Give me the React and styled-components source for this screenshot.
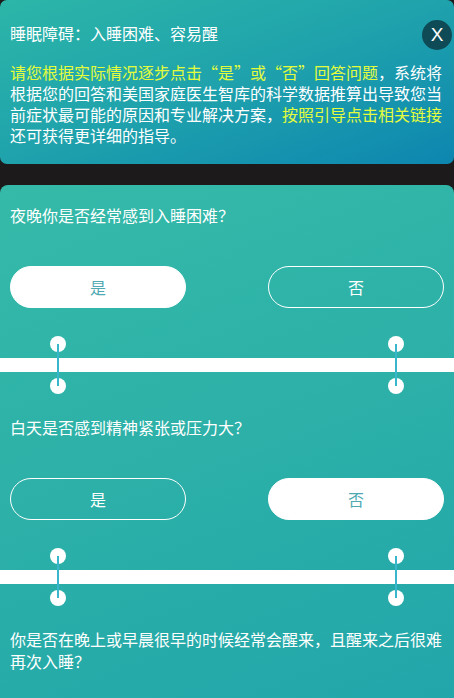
import React, { useState } from "react";
import styled, { createGlobalStyle } from "styled-components";

const Global = createGlobalStyle`
  html, body { margin: 0; padding: 0; background: #1c1a1b; }
  body { font-family: "Noto Sans CJK SC", "Noto Sans", sans-serif; }
  * { box-sizing: border-box; }
`;

const Page = styled.div`
  width: 454px;
  min-height: 698px;
  background: #1c1a1b;
  display: flex;
  flex-direction: column;
  gap: 21px;
`;

const Header = styled.header`
  position: relative;
  height: 164px;
  padding: 22px 10px 0 10px;
  border-radius: 7px;
  background: linear-gradient(160deg, #2cb6a8 0%, #1fa2ac 50%, #0d86b0 100%);
  color: #fff;
`;

const Title = styled.h1`
  margin: 0;
  font-size: 16px;
  font-weight: 400;
  line-height: 22px;
  white-space: nowrap;
`;

const Intro = styled.p`
  margin: 18px 0 0 0;
  font-size: 16px;
  line-height: 21px;
  width: 434px;
`;

const Highlight = styled.span`
  color: #e4fc3c;
`;

const Close = styled.button`
  position: absolute;
  top: 20px;
  right: 2px;
  width: 30px;
  height: 30px;
  border-radius: 50%;
  border: none;
  background: #0e4b57;
  color: #fff;
  font-family: "Liberation Sans", sans-serif;
  font-size: 19px;
  line-height: 30px;
  padding: 0;
  text-align: center;
`;

const Card = styled.section`
  flex: 1;
  border-radius: 8px 8px 0 0;
  background: linear-gradient(160deg, #35baa9 0%, #2cb0a8 50%, #22a6aa 100%);
  padding-top: 19px;
  color: #fff;
`;

const Question = styled.div`
  padding: 0 10px;
  font-size: 16px;
  line-height: 22px;
`;

const Answers = styled.div`
  margin-top: 40px;
  padding: 0 10px;
  display: flex;
  justify-content: space-between;
`;

const Answer = styled.button`
  width: 176px;
  height: 42px;
  border-radius: 21px;
  border: 1px solid #fff;
  background: ${(p) => (p.$active ? "#fff" : "transparent")};
  color: ${(p) => (p.$active ? "#4fa9b2" : "#fff")};
  font-family: "Noto Sans CJK SC", sans-serif;
  font-size: 16px;
  padding: 0;
  cursor: pointer;
`;

const Connector = styled.div`
  position: relative;
  margin: 28px 0 22px 0;
  height: 58px;
  display: flex;
  align-items: center;
`;

const Bar = styled.div`
  width: 100%;
  height: 14px;
  background: #fff;
`;

const Link = styled.div`
  position: absolute;
  top: 0;
  left: ${(p) => p.$x - 8}px;
  width: 16px;
  height: 58px;
`;

const Dot = styled.span`
  position: absolute;
  left: 0;
  ${(p) => (p.$bottom ? "bottom: 0;" : "top: 0;")}
  width: 16px;
  height: 16px;
  border-radius: 50%;
  background: #fff;
`;

const Line = styled.span`
  position: absolute;
  left: 7px;
  top: 8px;
  width: 2px;
  height: 42px;
  background: #38b6cc;
`;

const Joint = ({ x }) => (
  <Link $x={x}>
    <Dot />
    <Dot $bottom />
    <Line />
  </Link>
);

const questions = [
  { text: "夜晚你是否经常感到入睡困难？", init: "yes" },
  { text: "白天是否感到精神紧张或压力大？", init: "no" },
  { text: "你是否在晚上或早晨很早的时候经常会醒来，且醒来之后很难再次入睡？", init: null },
];

const Block = ({ q, last }) => {
  const [v, setV] = useState(q.init);
  return (
    <div>
      <Question>{q.text}</Question>
      {!last && (
        <>
          <Answers>
            <Answer $active={v === "yes"} onClick={() => setV("yes")}>是</Answer>
            <Answer $active={v === "no"} onClick={() => setV("no")}>否</Answer>
          </Answers>
          <Connector>
            <Bar />
            <Joint x={58} />
            <Joint x={396} />
          </Connector>
        </>
      )}
    </div>
  );
};

export default function App() {
  return (
    <>
      <Global />
      <Page>
        <Header>
          <Title>睡眠障碍：入睡困难、容易醒</Title>
          <Close>X</Close>
          <Intro>
            <Highlight>请您根据实际情况逐步点击“是”或“否”回答问题</Highlight>，系统将根据您的回答和美国家庭医生智库的科学数据推算出导致您当前症状最可能的原因和专业解决方案，
            <Highlight>按照引导点击相关链接</Highlight>还可获得更详细的指导。
          </Intro>
        </Header>
        <Card>
          {questions.map((q, i) => (
            <Block key={i} q={q} last={i === questions.length - 1} />
          ))}
        </Card>
      </Page>
    </>
  );
}
